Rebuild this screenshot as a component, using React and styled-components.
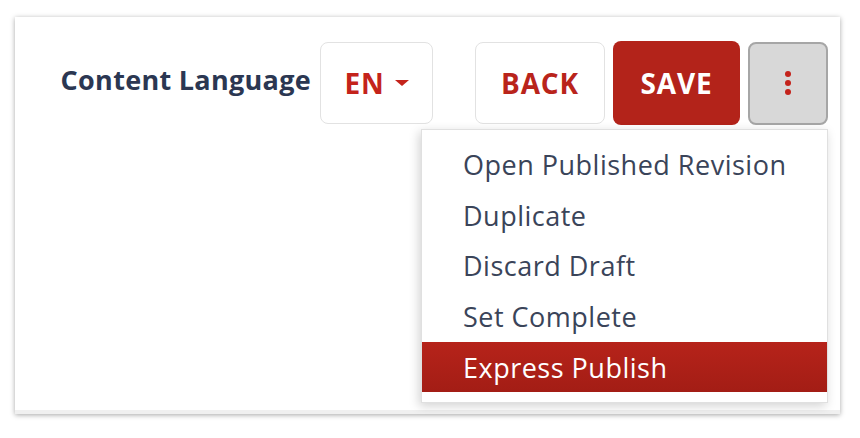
import React from "react";
import styled, { createGlobalStyle } from "styled-components";

const GlobalStyle = createGlobalStyle`
  body {
    margin: 0;
    background: #fff;
    font-family: "Open Sans", "Lato", sans-serif;
  }
`;

const menuItems = [
  "Open Published Revision",
  "Duplicate",
  "Discard Draft",
  "Set Complete",
  "Express Publish",
];

function App() {
  return (
    <>
      <GlobalStyle />
      <Page>
        <Card>
          <Toolbar>
            <Label>Content Language</Label>
            <LangButton>
              EN <Caret />
            </LangButton>
            <Spacer />
            <OutlineButton>BACK</OutlineButton>
            <SaveButton>SAVE</SaveButton>
            <MenuWrap>
              <KebabButton>
                <svg width="8" height="26" viewBox="0 0 8 26">
                  <circle cx="4" cy="4" r="3" fill="#c4231b" />
                  <circle cx="4" cy="13" r="3" fill="#c4231b" />
                  <circle cx="4" cy="22" r="3" fill="#c4231b" />
                </svg>
              </KebabButton>
              <Menu>
                {menuItems.map((item) => (
                  <MenuItem key={item} active={item === "Express Publish"}>
                    {item}
                  </MenuItem>
                ))}
              </Menu>
            </MenuWrap>
          </Toolbar>
        </Card>
      </Page>
    </>
  );
}
export default App;

const Page = styled.div`
  padding: 17px 20px 24px 15px;
`;

const Card = styled.div`
  width: 825px;
  height: 397px;
  box-sizing: border-box;
  background: #fff;
  border-bottom: 4px solid #f0f0f0;
  box-shadow: 0 1px 5px rgba(0, 0, 0, 0.35);
`;

const Toolbar = styled.div`
  display: flex;
  align-items: center;
  justify-content: flex-end;
  padding: 24px 12px 0 0;
`;

const Label = styled.span`
  color: #2b3752;
  font-size: 27px;
  font-weight: 700;
  letter-spacing: 0.3px;
  margin-right: 9px;
  margin-top: -8px;
`;

const BaseButton = styled.button`
  display: flex;
  align-items: center;
  justify-content: center;
  height: 82px;
  box-sizing: border-box;
  border-radius: 8px;
  font-family: inherit;
  font-size: 28px;
  font-weight: 700;
  letter-spacing: 0.8px;
  cursor: pointer;
`;

const LangButton = styled(BaseButton)`
  width: 113px;
  gap: 10px;
  background: #fff;
  color: #c4231b;
  border: 1px solid #e2e2e2;
`;

const Caret = styled.span`
  width: 0;
  height: 0;
  border-left: 7px solid transparent;
  border-right: 7px solid transparent;
  border-top: 6px solid #c4231b;
`;

const Spacer = styled.div`
  width: 42px;
`;

const OutlineButton = styled(BaseButton)`
  width: 130px;
  background: #fff;
  color: #b9241b;
  border: 1px solid #e2e2e2;
`;

const SaveButton = styled(BaseButton)`
  width: 127px;
  height: 84px;
  margin-left: 8px;
  background: #b3231a;
  color: #fff;
  border: none;
`;

const MenuWrap = styled.div`
  position: relative;
  margin-left: 8px;
`;

const KebabButton = styled(BaseButton)`
  width: 80px;
  height: 83px;
  background: #d8d8d8;
  border: 2px solid #a6a6a6;
`;

const Menu = styled.div`
  position: absolute;
  top: 87px;
  right: 0;
  width: 407px;
  padding: 10px 0;
  background: #fff;
  border: 1px solid #e0e0e0;
  box-sizing: border-box;
  box-shadow: -2px 3px 10px rgba(0, 0, 0, 0.18);
`;

const MenuItem = styled.div`
  height: 50.6px;
  display: flex;
  align-items: center;
  padding-left: 41px;
  font-size: 27px;
  letter-spacing: 0.5px;
  color: ${(p) => (p.active ? "#fff" : "#3a4459")};
  background: ${(p) =>
    p.active ? "linear-gradient(#b6231a, #a31d15)" : "transparent"};
`;
